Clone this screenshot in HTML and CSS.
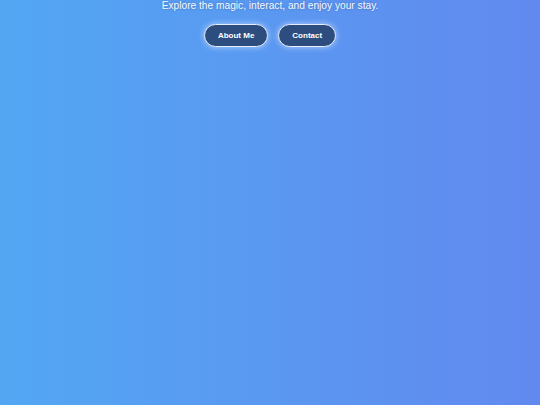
FILE: index.html
```html
<!DOCTYPE html>
<html>
<head>
<meta charset="utf-8">
<link rel="stylesheet" href="styles.css">
</head>
<body>
<main class="hero">
  <p class="tagline">Explore the magic, interact, and enjoy your stay.</p>
  <div class="actions">
    <a class="btn" href="#">About Me</a>
    <a class="btn" href="#">Contact</a>
  </div>
</main>
</body>
</html>
```
FILE: styles.css
```css
html, body {
  margin: 0;
  height: 100%;
}
body {
  background: linear-gradient(90deg, #52a7f3 0%, #5a98f1 50%, #6189ef 100%);
  font-family: "Liberation Sans", Arial, sans-serif;
  overflow: hidden;
}
.hero {
  display: flex;
  flex-direction: column;
  align-items: center;
  margin-top: -3px;
}
.tagline {
  margin: 0;
  color: #f4f8ff;
  font-size: 10.2px;
  line-height: 18px;
  text-shadow: 0 0 3px rgba(20, 40, 90, 0.35);
}
.actions {
  display: flex;
  gap: 10px;
  margin-top: 9px;
}
.btn {
  display: flex;
  align-items: center;
  justify-content: center;
  height: 21px;
  padding: 0 13px;
  border: 1.5px solid #e6efff;
  border-radius: 999px;
  background: #2e4d7f;
  color: #ffffff;
  font-size: 8px;
  font-weight: bold;
  text-decoration: none;
  box-shadow: 0 0 6px rgba(255, 255, 255, 0.55);
}
```
